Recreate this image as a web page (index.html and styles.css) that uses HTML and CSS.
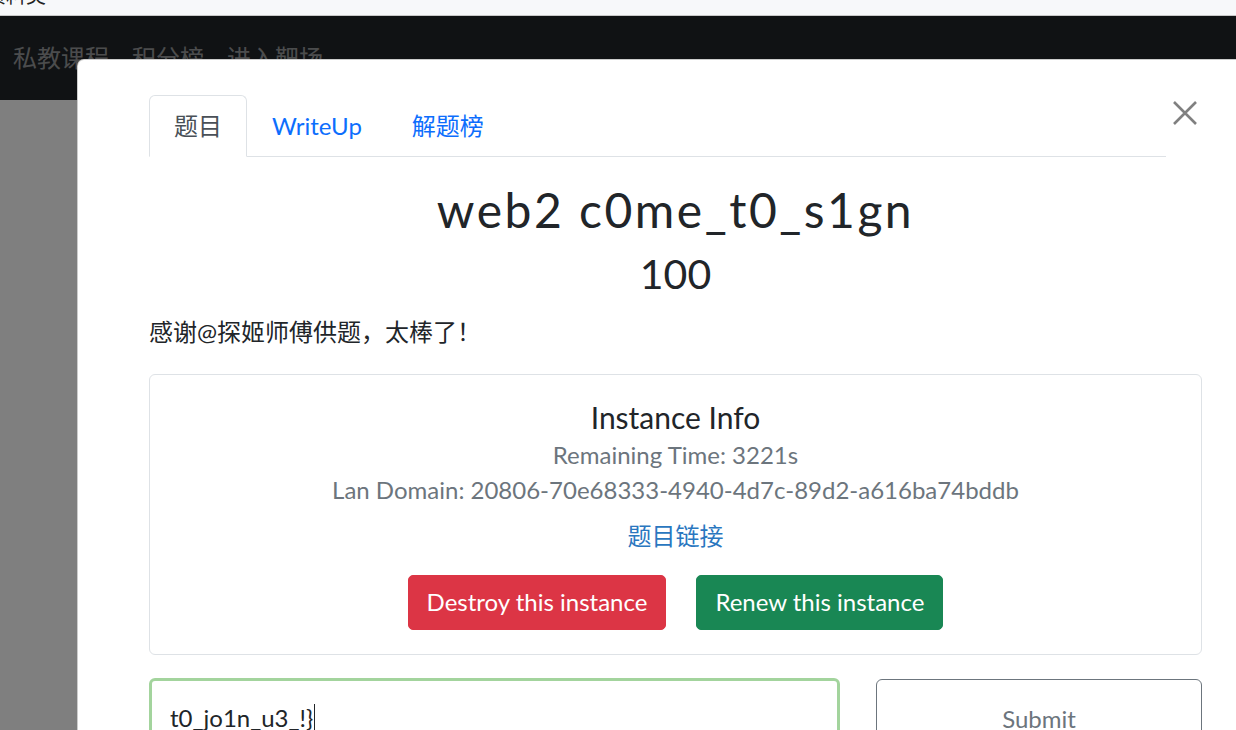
FILE: index.html
```html
<!DOCTYPE html>
<html lang="zh">
<head>
<meta charset="utf-8">
<title>web2 c0me_t0_s1gn</title>
<link rel="stylesheet" href="styles.css">
</head>
<body>
<div class="topstrip"><span class="topstrip-text">资料类</span></div>
<div class="page">
  <nav class="navbar">
    <a class="nav-item">私教课程</a>
    <a class="nav-item">积分榜</a>
    <a class="nav-item">进入靶场</a>
  </nav>
  <div class="page-body"></div>
  <div class="backdrop"></div>
  <div class="modal">
    <div class="modal-header">
      <ul class="tabs">
        <li class="tab active">题目</li>
        <li class="tab">WriteUp</li>
        <li class="tab">解题榜</li>
      </ul>
      <button class="close" aria-label="Close">
        <svg width="24" height="24" viewBox="0 0 24 24"><path d="M1 1L23 23M23 1L1 23" stroke="#808080" stroke-width="2.6" fill="none"/></svg>
      </button>
    </div>
    <h1 class="title">web2 c0me_t0_s1gn</h1>
    <div class="score">100</div>
    <p class="desc">感谢@探姬师傅供题，太棒了！</p>
    <div class="card">
      <div class="card-title">Instance Info</div>
      <div class="muted first">Remaining Time: 3221s</div>
      <div class="muted">Lan Domain: 20806-70e68333-4940-4d7c-89d2-a616ba74bddb</div>
      <a class="link">题目链接</a>
      <div class="btn-row">
        <button class="btn btn-danger">Destroy this instance</button>
        <button class="btn btn-success">Renew this instance</button>
      </div>
    </div>
    <div class="submit-row">
      <div class="flag-input"><span class="flag-text">t0_jo1n_u3_!}</span><span class="caret"></span></div>
      <button class="btn-submit">Submit</button>
    </div>
  </div>
</div>
</body>
</html>
```
FILE: styles.css
```css
html, body {
  margin: 0;
  padding: 0;
  height: 100%;
  overflow: hidden;
}
body {
  font-family: Lato, "Noto Sans CJK SC", sans-serif;
  font-size: 24px;
  line-height: 1.5;
  color: #212529;
  background: #fff;
}
.topstrip {
  height: 15px;
  background: #f7f8fa;
  border-bottom: 1px solid #c8c8c8;
  overflow: hidden;
}
.topstrip-text {
  display: block;
  margin-top: -17px;
  margin-left: -14px;
  font-family: "Noto Sans CJK SC", sans-serif;
  font-size: 20px;
  line-height: 24px;
  color: #222;
}
.page {
  position: relative;
  height: 714px;
}
.navbar {
  height: 84px;
  background: #212529;
  display: flex;
  align-items: center;
  gap: 23px;
  padding: 0 13px;
  box-sizing: border-box;
}
.nav-item {
  font-family: "Noto Sans CJK SC", sans-serif;
  font-size: 24px;
  line-height: 36px;
  color: rgba(255,255,255,.55);
  margin-top: -3px;
}
.page-body {
  height: 630px;
  background: #fff;
}
.backdrop {
  position: absolute;
  inset: 0;
  background: rgba(0,0,0,.5);
}
.modal {
  position: absolute;
  left: 77px;
  top: 43px;
  width: 1198px;
  height: 720px;
  background: #fff;
  border: 1px solid rgba(0,0,0,.2);
  border-radius: 7px;
  box-sizing: border-box;
  padding: 35px 72px 0 71px;
}
.modal-header {
  display: flex;
  align-items: flex-start;
}
.tabs {
  list-style: none;
  margin: 0;
  padding: 0;
  display: flex;
  flex: 1;
  border-bottom: 1px solid #dee2e6;
}
.tab {
  font-family: Lato, "Noto Sans CJK SC", sans-serif;
  font-size: 24px;
  line-height: 36px;
  padding: 12px 24px;
  border: 1px solid transparent;
  border-top-left-radius: 6px;
  border-top-right-radius: 6px;
  margin-bottom: -1px;
  color: #0d6efd;
}
.tab.active {
  color: #495057;
  background: #fff;
  border-color: #dee2e6 #dee2e6 #fff;
}
.close {
  width: 36px;
  height: 36px;
  border: 0;
  background: none;
  padding: 0 0 0 7px;
  margin-top: 0;
  display: flex;
  align-items: center;
  justify-content: flex-start;
}
.title {
  margin: 24px 0 0;
  text-align: center;
  font-weight: 400;
  font-size: 48px;
  line-height: 1.2;
  letter-spacing: 2.5px;
}
.score {
  margin-top: 10px;
  text-align: center;
  font-size: 41px;
  line-height: 1.2;
}
.desc {
  margin: 16px 0 0;
  font-size: 24px;
  line-height: 36px;
}
.card {
  margin-top: 24px;
  border: 1px solid #dee2e6;
  border-radius: 6px;
  padding: 24px 24px 24px;
  text-align: center;
  display: flex;
  flex-direction: column;
  align-items: center;
}
.card-title {
  font-size: 30px;
  line-height: 36px;
}
.muted {
  color: #6c757d;
  line-height: 35px;
}
.muted.first {
  margin-top: 2px;
}
.link {
  color: #2a77bf;
  margin-top: 11px;
  line-height: 35px;
}
.btn-row {
  display: flex;
  gap: 30px;
  margin-top: 22px;
}
.btn {
  font-family: Lato, sans-serif;
  font-size: 24px;
  line-height: 36px;
  padding: 8.5px 18px;
  border: 1px solid transparent;
  border-radius: 5px;
  color: #fff;
}
.btn-danger {
  background: #dc3545;
  border-color: #dc3545;
}
.btn-success {
  background: #198754;
  border-color: #198754;
}
.submit-row {
  display: grid;
  grid-template-columns: 691px 1fr;
  gap: 36px;
  margin-top: 23px;
}
.flag-input {
  height: 80px;
  border: 3px solid #a3d49d;
  border-radius: 6px;
  box-sizing: border-box;
  padding: 0 18px;
  display: flex;
  align-items: center;
  font-size: 24px;
}
.flag-text {
  color: #212529;
  margin-top: 1px;
}
.caret {
  width: 1px;
  height: 28px;
  background: #212529;
  margin-left: 1px;
  margin-top: 1px;
}
.btn-submit {
  height: 80px;
  margin-top: 1px;
  background: #fff;
  border: 1px solid #6c757d;
  border-radius: 6px;
  color: #6c757d;
  font-family: Lato, sans-serif;
  font-size: 24px;
  line-height: 36px;
  display: flex;
  align-items: center;
  justify-content: center;
  padding: 0;
}
```
